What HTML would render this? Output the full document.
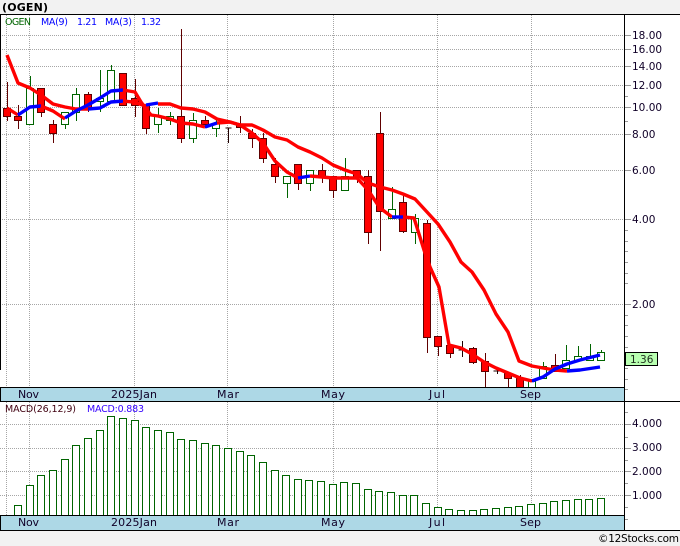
<!DOCTYPE html>
<html><head><meta charset="utf-8"><style>
html,body{margin:0;padding:0;background:#f2f2f2;width:680px;height:546px;overflow:hidden}
svg{display:block}
text{font-family:"DejaVu Sans","Liberation Sans",sans-serif;font-size:10.5px;fill:#100028}
.grid{stroke:#a6a6a6;stroke-width:1;stroke-dasharray:1 1;fill:none}
.tick{stroke:#999;stroke-width:1;fill:none}
.g rect{fill:#fff;stroke:#006400;width:7px}
.r rect{fill:#f00;stroke:#600000;width:7px}
.wg{stroke:#006400;fill:none}
.wr{stroke:#600000;fill:none}
.m rect{fill:#fff;stroke:#006400}
.l{fill:none;stroke-width:3.4;stroke-linejoin:round;stroke-linecap:butt}
.mo{font-size:11px}
.lg{font-size:9.5px}
</style></head><body>
<svg width="680" height="546" viewBox="0 0 680 546" xmlns="http://www.w3.org/2000/svg">
<rect width="680" height="546" fill="#f2f2f2"/>
<rect x="0" y="14" width="680" height="517" fill="#fff"/>
<text x="2" y="11" textLength="46" style="font-weight:bold;font-size:11px;fill:#000">(OGEN)</text>
<g class="grid">
<path d="M0 35.500H624M0 49.500H624M0 66.500H624M0 85.500H624M0 107.500H624M0 134.500H624M0 170.500H624M0 219.500H624M0 304.500H624"/>
<path d="M0 424.500H624M0 448.500H624M0 471.500H624M0 495.500H624"/>
<path d="M6.500 15V387M29.500 15V387M134.500 15V387M227.500 15V387M333.500 15V387M437.500 15V387M531.500 15V387"/>
<path d="M6.500 402V515M29.500 402V515M134.500 402V515M227.500 402V515M333.500 402V515M437.500 402V515M531.500 402V515"/>
</g>
<!-- candles -->
<g transform="translate(.5 0)">
<path class="wr" d="M7 82V121M18 105V129M41 88V117M53 120V143M88 92V112M123 73V105M135 79V117M146 105V134M181 29V143M205 116V128M240 116V133M252 129V148M263 133V163M275 158V183M298 164V190M322 164V183M333 176V198M357 170V183M368 170V244M380 112V251M403 195V233M427 220V353M438 336V356M450 345V358M473 347V364M485 353V387M508 372V387M520 375V387M555 354V371"/>
<path d="M228 128V143M225 128H231M462 341V357M458 350H466M497 369V374M493 371H501" stroke="#200000" fill="none"/>
<path class="wg" d="M30 76V124M65 112V129M76 88V121M100 70V112M111 65V101M158 108V133M170 112V125M193 113V143M216 120V137M287 176V198M310 170V191M345 158V190M392 187V218M415 214V244M532 380V387M543 362V378M566 345V368M578 346V360M590 344V360M601 350V360"/>
<g class="g" transform="translate(-1 0)">
<rect x="27" y="88.500" width="7" height="36"/><rect x="62" y="112.500" width="7" height="12"/><rect x="73" y="94.500" width="7" height="18"/><rect x="97" y="98.500" width="7" height="3"/><rect x="108" y="70.500" width="7" height="31"/><rect x="155" y="116.500" width="7" height="8"/><rect x="167" y="116.500" width="7" height="4"/><rect x="190" y="120.500" width="7" height="18"/><rect x="213" y="123.500" width="7" height="5"/><rect x="284" y="176.500" width="7" height="7"/><rect x="307" y="170.500" width="7" height="13"/><rect x="342" y="176.500" width="7" height="14"/><rect x="389" y="209.500" width="7" height="9"/><rect x="412" y="218.500" width="7" height="14"/><rect x="529" y="381.500" width="7" height="6"/><rect x="540" y="366.500" width="7" height="12"/><rect x="563" y="360.500" width="7" height="8"/><rect x="575" y="356.500" width="7" height="4"/><rect x="587" y="356.500" width="7" height="4"/><rect x="598" y="352.500" width="7" height="8"/>
</g>
<g class="r" transform="translate(-1 0)">
<rect x="4" y="108.500" width="7" height="8"/><rect x="15" y="116.500" width="7" height="4"/><rect x="38" y="88.500" width="7" height="24"/><rect x="50" y="124.500" width="7" height="9"/><rect x="85" y="94.500" width="7" height="15"/><rect x="120" y="73.500" width="7" height="32"/><rect x="132" y="98.500" width="7" height="7"/><rect x="143" y="105.500" width="7" height="23"/><rect x="178" y="116.500" width="7" height="22"/><rect x="202" y="120.500" width="7" height="4"/><rect x="237" y="124.500" width="7" height="3"/><rect x="249" y="133.500" width="7" height="5"/><rect x="260" y="138.500" width="7" height="20"/><rect x="272" y="164.500" width="7" height="12"/><rect x="295" y="164.500" width="7" height="19"/><rect x="319" y="170.500" width="7" height="7"/><rect x="330" y="176.500" width="7" height="14"/><rect x="354" y="170.500" width="7" height="7"/><rect x="365" y="176.500" width="7" height="56"/><rect x="377" y="133.500" width="7" height="78"/><rect x="400" y="202.500" width="7" height="29"/><rect x="424" y="223.500" width="7" height="114"/><rect x="435" y="336.500" width="7" height="10"/><rect x="447" y="345.500" width="7" height="8"/><rect x="470" y="348.500" width="7" height="14"/><rect x="482" y="361.500" width="7" height="10"/><rect x="505" y="373.500" width="7" height="5"/><rect x="517" y="378.500" width="7" height="9"/><rect x="552" y="365.500" width="7" height="6"/>
</g>
</g>
<!-- MA lines -->
<polyline class="l" stroke="#ff0000" points="7,55 18,83 30,88 41,95 53,104 65,107 76,109 88,109"/>
<polyline class="l" stroke="#0000ff" points="88,109 100,108 111,102 123,101"/>
<polyline class="l" stroke="#ff0000" points="123,101 133,102 146,106"/>
<polyline class="l" stroke="#0000ff" points="146,105 158,103"/>
<polyline class="l" stroke="#ff0000" points="158,104 170,104 181,108 193,109 205,112 217,119 230,122 240,125 252,125 263,130 275,137 287,140 298,147 310,152 322,158 333,165 345,170 357,174 368,183 380,187 392,190 403,194 415,199 427,212 438,224 450,242 461,262 472,272 484,290 496,314 508,332 519,361 532,366 543,368 555,370 567,371"/>
<polyline class="l" stroke="#0000ff" points="567,371 580,370 600,367"/>
<polyline class="l" stroke="#ff0000" points="7,108 18,115"/>
<polyline class="l" stroke="#0000ff" points="18,115 30,107 41,106"/>
<polyline class="l" stroke="#ff0000" points="41,106 53,111 65,119"/>
<polyline class="l" stroke="#0000ff" points="65,118 76,111 88,105 100,98 111,91 123,90"/>
<polyline class="l" stroke="#ff0000" points="123,90 135,92 141,102 146,109 151,115 158,116 170,119 181,123 193,124 205,127"/>
<polyline class="l" stroke="#0000ff" points="205,127 217,123"/>
<polyline class="l" stroke="#ff0000" points="217,123 230,122 240,125 252,133 263,143 275,161 287,172 298,178"/>
<polyline class="l" stroke="#0000ff" points="298,178 310,176"/>
<polyline class="l" stroke="#ff0000" points="310,176 322,177 333,178 345,178 357,178 368,190 380,208 392,217"/>
<polyline class="l" stroke="#0000ff" points="392,217 403,217"/>
<polyline class="l" stroke="#ff0000" points="403,217 414,218 424,250 430,267 439,287 449,345 461,348 472,354 484,362 496,368 508,373 520,378 532,381"/>
<polyline class="l" stroke="#0000ff" points="532,381 543,377 555,369 567,364 580,360 600,355"/>
<!-- bands -->
<rect x="0" y="388" width="624" height="13" fill="#add8e6"/>
<rect x="0" y="516" width="624" height="14" fill="#add8e6"/>
<!-- macd bars -->
<g class="m" transform="translate(.5 0)">
<rect x="14" y="505.500" width="7" height="10"/><rect x="26" y="485.500" width="7" height="30"/><rect x="37" y="475.500" width="7" height="40"/><rect x="49" y="470.500" width="7" height="45"/><rect x="61" y="459.500" width="7" height="56"/><rect x="72" y="445.500" width="7" height="70"/><rect x="84" y="438.500" width="7" height="77"/><rect x="96" y="430.500" width="7" height="85"/><rect x="107" y="416.500" width="7" height="99"/><rect x="119" y="418.500" width="7" height="97"/><rect x="131" y="420.500" width="7" height="95"/><rect x="142" y="427.500" width="7" height="88"/><rect x="154" y="430.500" width="7" height="85"/><rect x="166" y="432.500" width="7" height="83"/><rect x="177" y="439.500" width="7" height="76"/><rect x="189" y="440.500" width="7" height="75"/><rect x="201" y="443.500" width="7" height="72"/><rect x="212" y="445.500" width="7" height="70"/><rect x="224" y="448.500" width="7" height="67"/><rect x="236" y="451.500" width="7" height="64"/><rect x="247" y="455.500" width="7" height="60"/><rect x="259" y="462.500" width="7" height="53"/><rect x="271" y="470.500" width="7" height="45"/><rect x="282" y="475.500" width="7" height="40"/><rect x="294" y="479.500" width="7" height="36"/><rect x="305" y="480.500" width="7" height="35"/><rect x="317" y="481.500" width="7" height="34"/><rect x="329" y="484.500" width="7" height="31"/><rect x="340" y="482.500" width="7" height="33"/><rect x="352" y="483.500" width="7" height="32"/><rect x="364" y="489.500" width="7" height="26"/><rect x="375" y="491.500" width="7" height="24"/><rect x="387" y="492.500" width="7" height="23"/><rect x="399" y="495.500" width="7" height="20"/><rect x="410" y="495.500" width="7" height="20"/><rect x="422" y="503.500" width="7" height="12"/><rect x="434" y="507.500" width="7" height="8"/><rect x="445" y="509.500" width="7" height="6"/><rect x="457" y="510.500" width="7" height="5"/><rect x="469" y="510.500" width="7" height="5"/><rect x="480" y="509.500" width="7" height="6"/><rect x="492" y="508.500" width="7" height="7"/><rect x="504" y="507.500" width="7" height="8"/><rect x="515" y="506.500" width="7" height="9"/><rect x="527" y="504.500" width="7" height="11"/><rect x="539" y="503.500" width="7" height="12"/><rect x="550" y="501.500" width="7" height="14"/><rect x="562" y="500.500" width="7" height="15"/><rect x="574" y="499.500" width="7" height="16"/><rect x="585" y="499.500" width="7" height="16"/><rect x="597" y="498.500" width="7" height="17"/>
</g>
<!-- frame lines -->
<g stroke="#000" fill="none">
<path d="M0 14.500H680M0 387.500H624M0 401.500H680M0 515.500H624M0 530.500H680"/>
<path d="M624.500 14V531M.5 14V370M.5 388V401M.5 516V530"/>
</g>
<!-- ticks -->
<g class="tick">
<path d="M625 35.500H631M625 49.500H631M625 66.500H631M625 85.500H631M625 107.500H631M625 134.500H631M625 170.500H631M625 219.500H631M625 304.500H631"/>
<path d="M625 96.500H628M625 121.500H628M625 230.500H628M625 241.500H628M625 251.500H628M625 262.500H628M625 273.500H628M625 283.500H628M625 315.500H628M625 325.500H628M625 336.500H628M625 347.500H628M625 368.500H628M625 379.500H628M625 389.500H628"/>
<path d="M625 424.500H631M625 448.500H631M625 471.500H631M625 495.500H631"/>
<path d="M625 412.500H628M625 437.500H628M625 460.500H628M625 483.500H628M625 507.500H628M625 519.500H628"/>
</g>
<!-- axis labels -->
<g>
<text x="632" y="39">18.00</text><text x="632" y="53">16.00</text><text x="632" y="70">14.00</text><text x="632" y="89">12.00</text><text x="632" y="111">10.00</text><text x="632" y="138">8.00</text><text x="632" y="174">6.00</text><text x="632" y="223">4.00</text><text x="632" y="308">2.00</text>
<text x="632" y="427">4.000</text><text x="632" y="451">3.000</text><text x="632" y="475">2.000</text><text x="632" y="499">1.000</text>
</g>
<rect x="625.500" y="352.500" width="32" height="13" fill="#b8ffb0" stroke="#000"/>
<text x="630" y="363" style="fill:#203020">1.36</text>
<!-- months -->
<g class="months">
<text class="mo" x="18" y="398" textLength="21">Nov</text><text class="mo" x="111" y="398" textLength="46">2025Jan</text><text class="mo" x="217" y="398" textLength="22">Mar</text><text class="mo" x="321" y="398" textLength="24">May</text><text class="mo" x="429" y="398" textLength="16">Jul</text><text class="mo" x="520" y="398" textLength="21">Sep</text>
<text class="mo" x="18" y="526" textLength="21">Nov</text><text class="mo" x="111" y="526" textLength="46">2025Jan</text><text class="mo" x="217" y="526" textLength="22">Mar</text><text class="mo" x="321" y="526" textLength="24">May</text><text class="mo" x="429" y="526" textLength="16">Jul</text><text class="mo" x="520" y="526" textLength="21">Sep</text>
</g>
<text class="lg" x="5" y="25" textLength="26" style="fill:#006400">OGEN</text>
<text class="lg" x="41" y="25" textLength="27" style="fill:#0000ff">MA(9)</text>
<text class="lg" x="77" y="25" textLength="20" style="fill:#0000ff">1.21</text>
<text class="lg" x="105" y="25" textLength="27" style="fill:#0000ff">MA(3)</text>
<text class="lg" x="141" y="25" textLength="20" style="fill:#0000ff">1.32</text>
<text class="lg" x="5" y="412" textLength="71" style="fill:#400010">MACD(26,12,9)</text>
<text class="lg" x="87" y="412" textLength="57" style="fill:#3300ff">MACD:0.883</text>
<text x="598" y="542" textLength="81" style="fill:#000">©12Stocks.com</text>
</svg>
</body></html>
